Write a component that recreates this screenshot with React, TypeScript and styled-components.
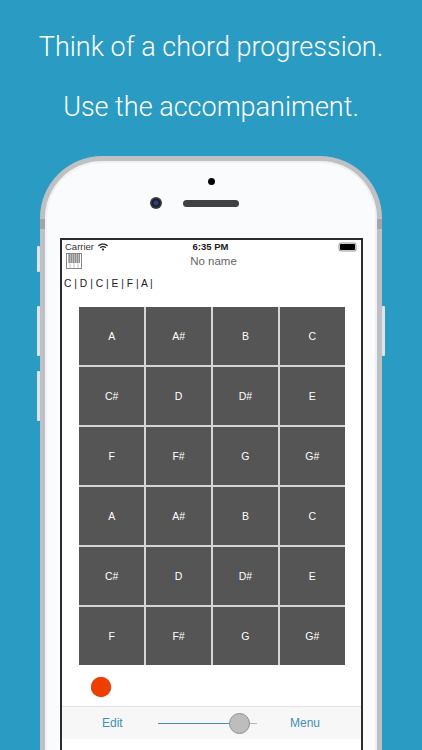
import styled, { createGlobalStyle } from "styled-components"
import { FaWifi } from "react-icons/fa"

const notes = ["A", "A#", "B", "C", "C#", "D", "D#", "E", "F", "F#", "G", "G#"]
const cells = [...notes, ...notes]

const GlobalStyle = createGlobalStyle`
  html, body {
    margin: 0;
    padding: 0;
    background: #2a9bc3;
  }
  * {
    box-sizing: border-box;
  }
`

const Page = styled.div`
  width: 422px;
  height: 750px;
  overflow: hidden;
  background: #2a9bc3;
  padding-top: 30px;
  font-family: "Roboto", "Liberation Sans", sans-serif;
`
const Headline = styled.h1`
  margin: 0 0 26px 0;
  height: 34px;
  line-height: 34px;
  text-align: center;
  color: #fff;
  font-size: 27px;
  font-weight: 300;
  white-space: nowrap;
`
const Phone = styled.div`
  position: relative;
  width: 342px;
  height: 640px;
  margin: 32px 0 0 40px;
  background: #fafbfd;
  border: 5px solid #bfc0c4;
  border-bottom: none;
  border-radius: 62px 62px 0 0;
  box-shadow: inset 0 0 0 2px #f0f1f4;
  padding: 0 14px 0 15px;
`
const SideButton = styled.div<{ $side: "left" | "right"; $top: number; $height: number }>`
  position: absolute;
  top: ${(p) => p.$top}px;
  ${(p) => (p.$side === "left" ? "left: -8px;" : "right: -8px;")}
  width: 3px;
  height: ${(p) => p.$height}px;
  background: #dfe5ec;
  border-radius: 1px;
`
const Band = styled.div<{ $side: "left" | "right" }>`
  position: absolute;
  top: 58px;
  ${(p) => (p.$side === "left" ? "left: -5px;" : "right: -5px;")}
  width: 5px;
  height: 10px;
  background: #a3a4a8;
`
const Earpiece = styled.div`
  height: 77px;
  padding-top: 17px;
  display: flex;
  flex-direction: column;
  align-items: center;
`
const Sensor = styled.div`
  width: 7px;
  height: 7px;
  border-radius: 50%;
  background: #050505;
`
const CameraRow = styled.div`
  display: flex;
  align-items: center;
  margin-top: 12px;
  margin-left: -35px;
`
const Camera = styled.div`
  width: 12px;
  height: 12px;
  border-radius: 50%;
  background: radial-gradient(circle at 50% 50%, #2a3f78 0 2px, #1c1f28 3px 4px, #3c3e44 5px);
`
const Speaker = styled.div`
  width: 56px;
  height: 7px;
  margin-left: 21px;
  border-radius: 4px;
  background: #3f4145;
`
const Screen = styled.div`
  width: 303px;
  height: 520px;
  background: #fff;
  border: 2px solid #2c2c2c;
  border-bottom: none;
  display: flex;
  flex-direction: column;
`
const StatusBar = styled.div`
  height: 13px;
  padding: 0 5px 0 3px;
  display: grid;
  grid-template-columns: 1fr auto 1fr;
  align-items: center;
  font-family: "Liberation Sans", sans-serif;
  font-size: 9.5px;
  color: #333;
`
const Carrier = styled.div`
  display: flex;
  align-items: center;
  gap: 4px;
`
const Clock = styled.div`
  font-weight: 700;
  color: #222;
`
const Battery = styled.div`
  justify-self: end;
  width: 17px;
  height: 8px;
  border-radius: 2px;
  background: #000;
  border: 1px solid #c4c4c4;
  box-shadow: 0 0 0 0.5px #999;
`
const NavBar = styled.div`
  height: 16px;
  padding-left: 4px;
  display: grid;
  grid-template-columns: 1fr auto 1fr;
  align-items: center;
`
const NavTitle = styled.div`
  font-family: "Liberation Sans", sans-serif;
  font-size: 11.5px;
  color: #666;
`
const Progression = styled.div`
  margin-top: 8px;
  height: 14px;
  line-height: 14px;
  padding-left: 2px;
  font-family: "Liberation Sans", sans-serif;
  font-size: 10.3px;
  color: #222;
`
const PadGrid = styled.div`
  width: 266px;
  height: 358px;
  margin: 16px 0 0 17px;
  display: grid;
  grid-template-columns: repeat(4, 1fr);
  grid-template-rows: repeat(6, 1fr);
  gap: 1.5px;
  background: #d6d6d6;
`
const Pad = styled.div`
  background: #555;
  color: #fff;
  display: flex;
  align-items: center;
  justify-content: center;
  font-family: "Liberation Sans", sans-serif;
  font-size: 10.5px;
`
const RecordRow = styled.div`
  height: 41px;
  padding: 3px 0 0 29px;
  display: flex;
  align-items: center;
`
const RecordButton = styled.div`
  width: 20px;
  height: 20px;
  border-radius: 50%;
  background: #ee3e00;
  box-shadow: 0 0 1px #8a3a20;
`
const Toolbar = styled.div`
  height: 33px;
  background: #f7f7f7;
  border-top: 1px solid #e2e2e2;
  display: flex;
  align-items: center;
`
const ToolLabel = styled.div<{ $width: number; $indent: number }>`
  width: ${(p) => p.$width}px;
  padding-left: ${(p) => p.$indent}px;
  font-family: "Liberation Sans", sans-serif;
  font-size: 12px;
  color: #3f8fb4;
`
const SliderTrack = styled.div`
  position: relative;
  width: 99px;
  height: 1px;
  background: #b8b8b8;
`
const SliderFill = styled.div<{ $value: number }>`
  width: ${(p) => p.$value}%;
  height: 100%;
  background: #3f8fb4;
`
const SliderThumb = styled.div<{ $value: number }>`
  position: absolute;
  top: -10px;
  left: ${(p) => p.$value}%;
  width: 21px;
  height: 21px;
  margin-left: -10px;
  border-radius: 50%;
  background: #bdbdbd;
  border: 1px solid #8f8f8f;
`

const PianoIcon = () => (
  <svg width="16" height="16" viewBox="0 0 16 16">
    <rect x="0.5" y="0.5" width="15" height="15" fill="#fff" stroke="#888" />
    {[3, 5, 7, 9, 11, 13].map((x) => (
      <rect key={x} x={x - 0.5} y="1" width="1.3" height="9" fill="#777" />
    ))}
    {[4, 8, 12].map((x) => (
      <line key={x} x1={x} y1="10" x2={x} y2="15" stroke="#aaa" strokeWidth="0.7" />
    ))}
  </svg>
)

const App = () => {
  const volume = 82

  return (
    <Page>
      <GlobalStyle />
      <Headline>Think of a chord progression.</Headline>
      <Headline>Use the accompaniment.</Headline>
      <Phone>
        <SideButton $side="left" $top={85} $height={26} />
        <SideButton $side="left" $top={145} $height={50} />
        <SideButton $side="left" $top={210} $height={50} />
        <SideButton $side="right" $top={145} $height={50} />
        <Band $side="left" />
        <Band $side="right" />
        <Earpiece>
          <Sensor />
          <CameraRow>
            <Camera />
            <Speaker />
          </CameraRow>
        </Earpiece>
        <Screen>
          <StatusBar>
            <Carrier>
              Carrier <FaWifi size={10} color="#222" />
            </Carrier>
            <Clock>6:35 PM</Clock>
            <Battery />
          </StatusBar>
          <NavBar>
            <PianoIcon />
            <NavTitle>No name</NavTitle>
          </NavBar>
          <Progression>C | D | C | E | F | A |</Progression>
          <PadGrid>
            {cells.map((note, i) => (
              <Pad key={i}>{note}</Pad>
            ))}
          </PadGrid>
          <RecordRow>
            <RecordButton />
          </RecordRow>
          <Toolbar>
            <ToolLabel $width={96} $indent={40}>Edit</ToolLabel>
            <SliderTrack>
              <SliderFill $value={volume} />
              <SliderThumb $value={volume} />
            </SliderTrack>
            <ToolLabel $width={90} $indent={33}>Menu</ToolLabel>
          </Toolbar>
        </Screen>
      </Phone>
    </Page>
  )
}

export default App
